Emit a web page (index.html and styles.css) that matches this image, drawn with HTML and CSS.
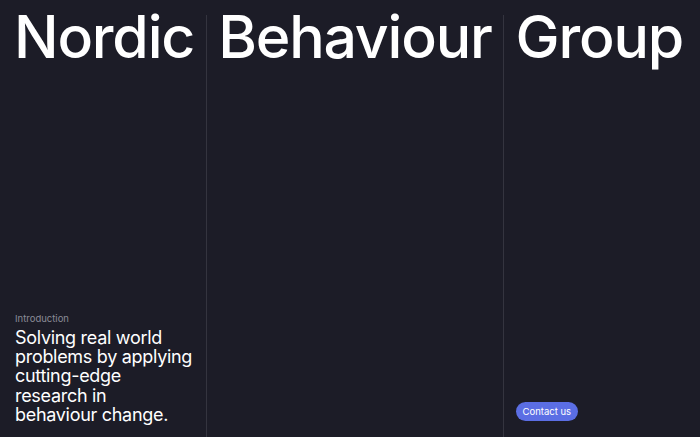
FILE: index.html
```html
<!DOCTYPE html>
<html lang="en">
  <head>
    <meta charset="UTF-8" />
    <meta name="viewport" content="width=device-width, initial-scale=1.0" />
    <title>Nordic Behaviour Group</title>
    <link rel="stylesheet" href="styles.css">
  </head>
  <body>
    <div class="page">
      <div class="col col-first">
        <h1 class="word">Nordic</h1>
        <div class="intro">
          <div class="label">Introduction</div>
          <p class="lead">Solving real world problems by applying cutting-edge research in behaviour change.</p>
        </div>
      </div>
      <div class="col">
        <h1 class="word">Behaviour</h1>
      </div>
      <div class="col col-last">
        <h1 class="word">Group</h1>
        <button class="contact">Contact us</button>
      </div>
    </div>
  </body>
</html>
```

FILE: styles.css
```css
body {
  margin: 0;
  padding: 0;
  background-color: #1c1c27;
  color: #fff;
  font-family: Inter, "Liberation Sans", sans-serif;
  height: 100vh;
  overflow: hidden;
}
.page {
  display: flex;
  height: 100%;
  padding-top: 15px;
  box-sizing: border-box;
}
.col {
  display: flex;
  flex-direction: column;
  justify-content: space-between;
  padding: 0 11px;
  border-left: 1px solid #34343f;
}
.col-first {
  border-left: none;
  padding-left: 14px;
  padding-right: 12px;
}
.col-last {
  flex: 1;
  padding-left: 12px;
}
.word {
  margin: -8px 0 0;
  font-size: 59px;
  font-weight: 500;
  line-height: 1;
  letter-spacing: -1.2px;
}
.intro {
  padding: 0 0 13px 1px;
  width: 178px;
}
.label {
  font-size: 9.5px;
  line-height: 12px;
  color: #8b8b97;
  margin-bottom: 3px;
}
.lead {
  margin: 0;
  font-size: 18px;
  line-height: 19.25px;
  letter-spacing: -0.3px;
}
.contact {
  align-self: flex-start;
  margin-bottom: 16px;
  padding: 4px 7px;
  background-color: #5b6ee4;
  color: #fff;
  border: none;
  border-radius: 10px;
  font-family: Inter, "Liberation Sans", sans-serif;
  font-size: 9.5px;
  cursor: pointer;
}
```
